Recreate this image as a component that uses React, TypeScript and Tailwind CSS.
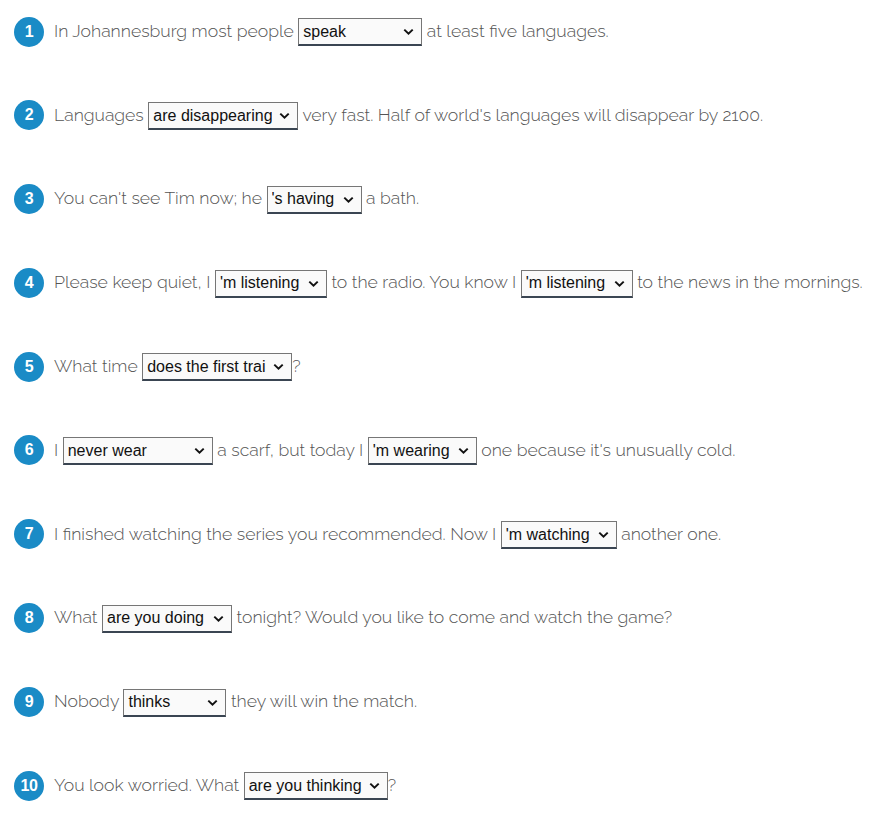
import React from "react";

type Part = string | { v: string; w: number };

const rows: Part[][] = [
  ["In Johannesburg most people", { v: "speak", w: 124 }, "at least five languages."],
  ["Languages", { v: "are disappearing", w: 150 }, "very fast. Half of world's languages will disappear by 2100."],
  ["You can't see Tim now; he", { v: "'s having", w: 95 }, "a bath."],
  ["Please keep quiet, I", { v: "'m listening", w: 112 }, "to the radio. You know I", { v: "'m listening", w: 112 }, "to the news in the mornings."],
  ["What time", { v: "does the first train leave", w: 150 }, "?"],
  ["I", { v: "never wear", w: 150 }, "a scarf, but today I", { v: "'m wearing", w: 109 }, "one because it's unusually cold."],
  ["I finished watching the series you recommended. Now I", { v: "'m watching", w: 116 }, "another one."],
  ["What", { v: "are you doing", w: 130 }, "tonight? Would you like to come and watch the game?"],
  ["Nobody", { v: "thinks", w: 103 }, "they will win the match."],
  ["You look worried. What", { v: "are you thinking", w: 144 }, "?"],
];

function Sel({ v, w }: { v: string; w: number }) {
  return (
    <span className="relative inline-block align-middle" style={{ width: w }}>
      <select
        defaultValue={v}
        className="block h-[28px] w-full appearance-none overflow-hidden whitespace-nowrap border border-[#767676] border-b-2 border-b-[#3a4552] bg-[#fafafa] pl-[4px] pr-[25px] text-[16px] font-normal leading-[24px] text-[#111] font-['Liberation_Sans',Arial,sans-serif]"
      >
        <option value={v}>{v}</option>
      </select>
      <svg
        className="pointer-events-none absolute right-[8px] top-[10px]"
        width="11"
        height="8"
        viewBox="0 0 11 8"
      >
        <path d="M1.3 1.6 L5.5 5.6 L9.7 1.6" fill="none" stroke="#111" strokeWidth="2" />
      </svg>
    </span>
  );
}

export default function App() {
  return (
    <div className="w-[893px] h-[828px] bg-white pt-[18px] pl-[14px] font-['Raleway','Lato',sans-serif] font-light text-[#555] text-[17.6px]">
      <div className="flex flex-col gap-[56.8px]">
        {rows.map((parts, i) => (
          <div key={i} className="flex h-[27px] items-center">
            <div className="flex h-[30px] w-[30px] shrink-0 items-center justify-center rounded-full bg-[#1a8bc6] text-[16px] font-bold text-white font-['Liberation_Sans',Arial,sans-serif] tracking-[-0.5px]">
              {i + 1}
            </div>
            <div className="ml-[10px] whitespace-nowrap leading-[28px]">
              {parts.map((p, j) =>
                typeof p === "string" ? (
                  <span key={j}>
                    {p === "?" ? "" : j > 0 ? " " : ""}
                    {p}
                    {j < parts.length - 1 && p !== "?" ? " " : ""}
                  </span>
                ) : (
                  <Sel key={j} v={p.v} w={p.w} />
                )
              )}
            </div>
          </div>
        ))}
      </div>
    </div>
  );
}
